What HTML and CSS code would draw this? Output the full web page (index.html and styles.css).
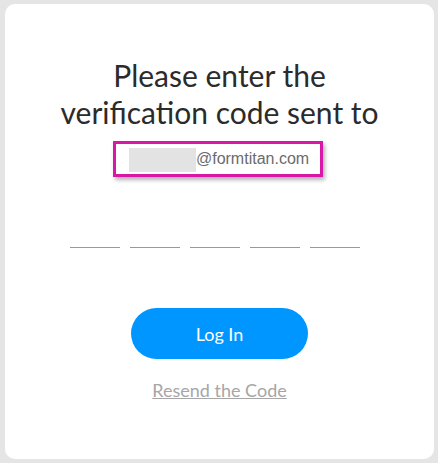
FILE: index.html
```html
<!DOCTYPE html>
<html>
<head>
<meta charset="utf-8">
<link rel="stylesheet" href="styles.css">
</head>
<body>
<div class="card">
  <h1 class="title">Please enter the<br>verification code sent to</h1>
  <div class="email-box"><span class="email">t@formtitan.com</span><span class="blur"></span></div>
  <div class="code">
    <span class="digit"></span><span class="digit"></span><span class="digit"></span><span class="digit"></span><span class="digit"></span>
  </div>
  <button class="login">Log In</button>
  <a class="resend" href="#">Resend the Code</a>
</div>
</body>
</html>
```
FILE: styles.css
```css
html, body { margin: 0; padding: 0; }
body {
  background: #e5e5e5;
  padding: 4px 4px 4px 5px;
  font-family: Lato, "Open Sans", sans-serif;
}
.card {
  width: 429px;
  height: 455px;
  box-sizing: border-box;
  background: #fff;
  border-radius: 10px;
  display: flex;
  flex-direction: column;
  align-items: center;
  padding-top: 53px;
}
.title {
  margin: 0;
  font-weight: 400;
  font-size: 30px;
  line-height: 37px;
  color: #2b2b2b;
  text-align: center;
}
.email-box {
  margin-top: 10px;
  margin-right: 4px;
  width: 210px;
  height: 36px;
  box-sizing: border-box;
  border: 3px solid #d917a6;
  box-shadow: 2px 3px 4px rgba(0,0,0,0.3);
  display: flex;
  align-items: center;
  padding-left: 76px;
  font-family: "Liberation Sans", Arial, sans-serif;
  font-size: 16px;
  color: #6b6b6b;
  position: relative;
}
.blur {
  position: absolute;
  left: 13px;
  top: 4px;
  width: 67px;
  height: 24px;
  background: #e3e3e3;
}
.code {
  margin-top: 70px;
  margin-right: 9px;
  display: flex;
  gap: 10px;
}
.digit {
  width: 50px;
  height: 1px;
  background: #999;
}
.login {
  margin-top: 60px;
  width: 177px;
  height: 51px;
  border: none;
  border-radius: 26px;
  background: #0096ff;
  color: #fff;
  font-family: Lato, sans-serif;
  font-size: 18px;
  padding: 0;
}
.resend {
  margin-top: 20px;
  font-size: 18px;
  color: #a6a6a6;
  text-decoration: underline;
}
```
